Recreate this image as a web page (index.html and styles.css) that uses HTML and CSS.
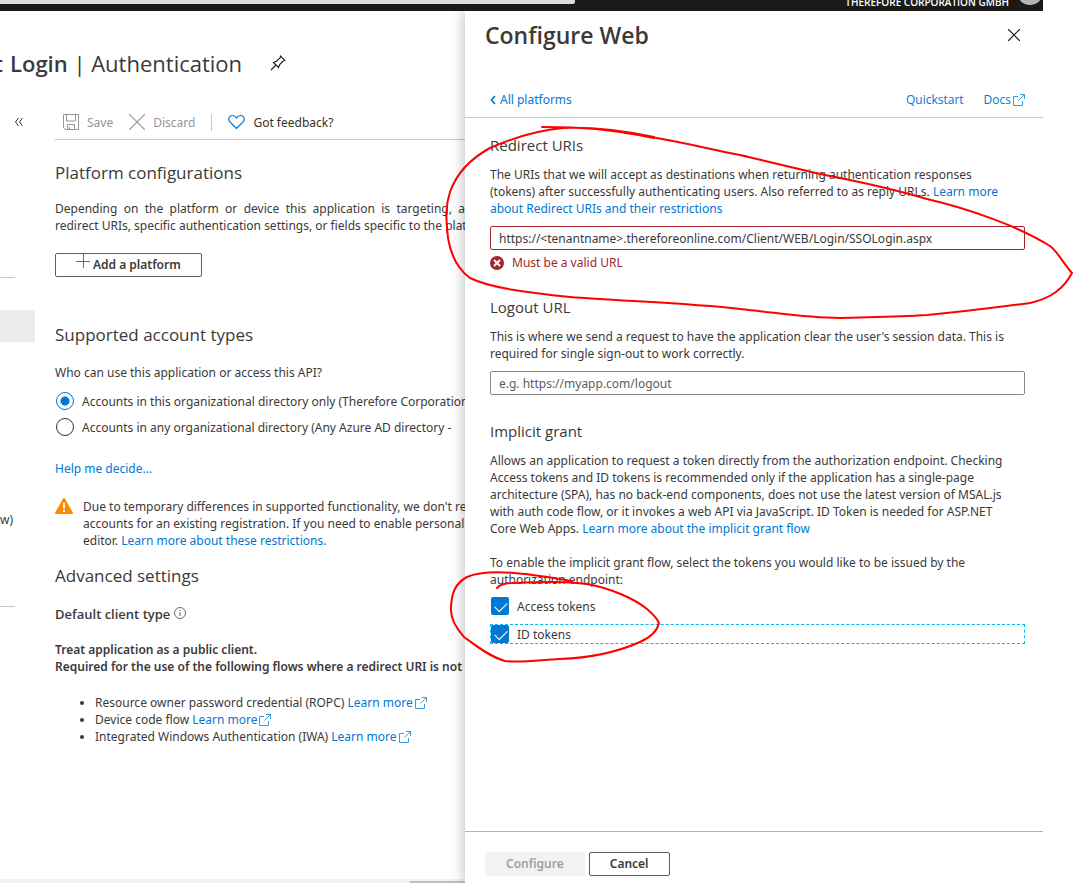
FILE: index.html
```html
<!DOCTYPE html>
<html lang="en">
<head>
<meta charset="utf-8">
<title>Configure Web</title>
<link rel="stylesheet" href="styles.css">
</head>
<body>
<svg class="symbols" aria-hidden="true">
  <symbol id="external" viewBox="0 0 14 14">
    <path d="M6 3.500H1.500v9h9V8M8 1.500h4.500v4.500M12.500 1.500L6.500 7.500" fill="none" stroke="#3a9fd6"/>
  </symbol>
</svg>
<div class="page">
  <header class="topbar">
    <div class="search"></div>
    <div class="tenant">THEREFORE CORPORATION GMBH</div>
    <div class="avatar"></div>
  </header>

  <main class="main">
    <div class="title">
      <span class="title-cut"><b>t</b></span>
      <h1><b>Login</b> | Authentication</h1>
      <svg class="pin" viewBox="0 0 16 16"><path d="M1 15l5-5M3.500 7.500l5 5 1.200-3L13 6l1.800-.6L10.600 1.200 10 3 6.500 6.300z" fill="none" stroke="#222" stroke-width="1.200"/></svg>
    </div>
    <div class="columns">
      <nav class="rail">
        <button class="collapse" aria-label="Collapse menu"><svg viewBox="0 0 8 8" width="8" height="8"><path d="M3.500 0L.5 4l3 4M7.500 0l-3 4 3 4" fill="none" stroke="#323130"/></svg></button>
        <hr class="rail-line">
        <div class="rail-active"></div>
        <div class="rail-text">w)</div>
        <hr class="rail-line">
      </nav>
      <div class="content">
        <div class="toolbar">
          <button class="tool" disabled>
            <svg viewBox="0 0 16 16" width="16" height="16"><path d="M.5.5h15v15h-13l-2-2zM3.500.5v6.500h9V.5M4.500 15.500v-5h7v5M6.500 15.500v-2.500" fill="none" stroke="#979593"/></svg>
            Save</button>
          <button class="tool" disabled>
            <svg viewBox="0 0 16 16" width="16" height="16"><path d="M0 0l16 16M16 0L0 16" fill="none" stroke="#979593" stroke-width="1.200"/></svg>
            Discard</button>
          <span class="tool-divider"></span>
          <button class="tool tool-on">
            <svg viewBox="0 0 17 16" width="17" height="16"><path d="M8.500 14.500L2 8C-.8 4.500 1.500 1.500 4.500 1.500c2 0 3.200 1 4 2.500.8-1.500 2-2.500 4-2.500 3 0 5.300 3 2.500 6.500z" fill="none" stroke="#0078d4" stroke-width="1.200"/></svg>
            Got feedback?</button>
        </div>

        <h2 class="h-platform">Platform configurations</h2>
        <p class="intro"><span class="spread">Depending on the platform or device this application is targeting, a</span>redirect URIs, specific authentication settings, or fields specific to the platform</p>
        <button class="btn add"><svg viewBox="0 0 15 15" width="15" height="15"><path d="M7.500 0v14M0 7.500h14" fill="none" stroke="#1a86c8"/></svg>Add a platform</button>

        <h2 class="h-accounts">Supported account types</h2>
        <p class="question" id="who">Who can use this application or access this API?</p>
        <div class="radios" role="radiogroup" aria-labelledby="who">
          <label class="choice"><input type="radio" name="acct" checked>Accounts in this organizational directory only (Therefore Corporation</label>
          <label class="choice"><input type="radio" name="acct">Accounts in any organizational directory (Any Azure AD directory -</label>
        </div>
        <p class="help"><a href="#">Help me decide...</a></p>
        <div class="warning">
          <svg viewBox="0 0 18 16" width="18" height="16"><path d="M9 1L17 15H1z" fill="#ff8c00" stroke="#ff8c00" stroke-width="2" stroke-linejoin="round"/><path d="M9 5v5.500M9 12v2" stroke="#fff" stroke-width="2"/></svg>
          <p>Due to temporary differences in supported functionality, we don't recommend<br>accounts for an existing registration. If you need to enable personal<br>editor. <a href="#">Learn more about these restrictions.</a></p>
        </div>

        <h2 class="h-advanced">Advanced settings</h2>
        <h3 class="client-type">Default client type <svg viewBox="0 0 12 12" width="12" height="12"><circle cx="6" cy="6" r="5.500" fill="none" stroke="#605e5c" stroke-width=".9"/><path d="M6 5v4M6 3v1" stroke="#605e5c"/></svg></h3>
        <p class="strong">Treat application as a public client.<br>Required for the use of the following flows where a redirect URI is not</p>
        <ul class="flows">
          <li>Resource owner password credential (ROPC) <a href="#">Learn more<svg class="ext"><use href="#external"/></svg></a></li>
          <li>Device code flow <a href="#">Learn more<svg class="ext"><use href="#external"/></svg></a></li>
          <li>Integrated Windows Authentication (IWA) <a href="#">Learn more<svg class="ext"><use href="#external"/></svg></a></li>
        </ul>
      </div>
    </div>
    <div class="scrollbar"><div class="thumb"></div></div>
  </main>

  <aside class="panel">
    <div class="panel-head">
      <h1>Configure Web</h1>
      <button class="close" aria-label="Close"><svg viewBox="0 0 12 12" width="12" height="12"><path d="M0 0l12 12M12 0L0 12" fill="none" stroke="#111" stroke-width="1.200"/></svg></button>
    </div>
    <div class="panel-nav">
      <a class="back" href="#"><svg viewBox="0 0 6 10" width="6" height="10"><path d="M5 1L1.500 5 5 9" fill="none" stroke="#0078d4" stroke-width="1.700"/></svg>All platforms</a>
      <a class="small" href="#">Quickstart</a>
      <a class="small" href="#">Docs<svg class="ext"><use href="#external"/></svg></a>
    </div>
    <div class="panel-body">
      <section>
        <h2><label for="redirect">Redirect URIs</label></h2>
        <p>The URIs that we will accept as destinations when returning authentication responses<br>(tokens) after successfully authenticating users. Also referred to as reply URLs. <a href="#">Learn more<br>about Redirect URIs and their restrictions</a></p>
        <input class="text invalid" id="redirect" type="text" value="https://&lt;tenantname&gt;.thereforeonline.com/Client/WEB/Login/SSOLogin.aspx">
        <div class="error"><svg viewBox="0 0 14 14" width="14" height="14"><circle cx="7" cy="7" r="7" fill="#a4262c"/><path d="M4 4l6 6M10 4l-6 6" stroke="#fff" stroke-width="2"/></svg>Must be a valid URL</div>
      </section>
      <section>
        <h2><label for="logout">Logout URL</label></h2>
        <p>This is where we send a request to have the application clear the user's session data. This is required for single sign-out to work correctly.</p>
        <input class="text" id="logout" type="text" placeholder="e.g. https://myapp.com/logout">
      </section>
      <section>
        <h2>Implicit grant</h2>
        <p>Allows an application to request a token directly from the authorization endpoint. Checking Access tokens and ID tokens is recommended only if the application has a single-page architecture (SPA), has no back-end components, does not use the latest version of MSAL.js with auth code flow, or it invokes a web API via JavaScript. ID Token is needed for ASP.NET<br>Core Web Apps. <a href="#">Learn more about the implicit grant flow</a></p>
        <p class="enable">To enable the implicit grant flow, select the tokens you would like to be issued by the authorization endpoint:</p>
        <div class="checks">
          <label class="check"><input type="checkbox" checked>Access tokens</label>
          <label class="check focused"><input type="checkbox" checked>ID tokens</label>
        </div>
      </section>
    </div>
    <footer class="panel-foot">
      <button class="btn primary" disabled>Configure</button>
      <button class="btn">Cancel</button>
    </footer>
  </aside>

  <svg class="markup" viewBox="0 0 1073 883" width="1073" height="883" aria-hidden="true">
    <path d="M542 127C583 127 607 129 654 138M654 137C620 130 590 127 563 128C540 130 515 137 490 148C470 159 456 175 450 192C444 210 447 225 448 238C451 256 459 270 470 278C490 288 530 293 570 297C620 301 690 303 740 309C780 313 805 318 840 318C870 317 895 317 927 315C970 311 1000 307 1030 303C1052 298 1064 288 1072 273C1063 263 1058 252 1050 246C1020 227 970 209 927 199C900 191 870 184 840 178C805 171 775 163 740 155C700 147 665 138 625 133"/>
    <path d="M497 588C501 584 505 583 512 583C540 582 565 581 587 584C610 588 635 599 647 609C654 615 657 618 659 623C657 632 649 638 640 642C615 653 590 658 560 659C540 660 520 663 505 661C490 657 475 645 464 637C455 627 451 618 451 610C451 592 456 583 467 577C490 567 535 575 572 581"/>
  </svg>
</div>
</body>
</html>
```
FILE: styles.css
```css
* { box-sizing: border-box; }

body {
  margin: 0;
  background: #fff;
  color: #3b3a39;
  font: 12px/17px "Noto Sans", "Open Sans", sans-serif;
}

h1, h2, h3, p, ul { margin: 0; font-weight: 400; }
h1, h2, .title-cut, .tenant { font-family: "Open Sans", "Noto Sans", sans-serif; }
a { color: #0078d4; text-decoration: none; }
svg { flex: none; }
button, input { font: inherit; color: inherit; }
b { font-weight: 600; }

.symbols { display: none; }
.ext { width: 14px; height: 14px; margin-left: 1px; vertical-align: -3px; }

.page {
  position: relative;
  display: grid;
  grid-template: 11px minmax(872px, 1fr) / minmax(0, 465fr) minmax(0, 578fr);
  min-height: 100vh;
  padding-right: 30px;
  overflow: hidden;
}

/* Top bar */
.topbar {
  grid-column: 1 / -1;
  display: flex;
  align-items: flex-end;
  gap: 8px;
  overflow: hidden;
  background: #1b1a19;
  color: #fff;
}
.search { width: 575px; height: 4px; margin: 0 auto auto 0; background: #dddcd8; border-radius: 0 0 2px 0; }
.tenant { padding-bottom: 2px; font-size: 10px; line-height: 14px; font-weight: 600; white-space: nowrap; }
.avatar { width: 26px; height: 26px; margin-bottom: 6px; border-radius: 50%; background: #b1b5b9; }

/* Page behind the panel */
.main { display: flex; flex-direction: column; overflow: hidden; white-space: nowrap; }
.title { display: flex; align-items: center; padding: 36px 0 26px; }
.title h1, .title-cut { font-size: 22px; line-height: 32px; }
.title-cut { display: flex; justify-content: flex-end; width: 3px; margin-right: 7px; overflow: hidden; }
.pin { width: 16px; height: 16px; margin-left: 28px; }
.columns { display: grid; grid-template-columns: 35px minmax(0, 1fr); gap: 20px; }

.rail { display: flex; flex-direction: column; }
.collapse { display: flex; align-items: center; height: 34px; padding: 0 0 0 15px; border: 0; background: none; }
.rail-line { width: 15px; height: 1px; margin: 138px 0 32px; border: 0; background: #c8c6c4; }
.rail-active { height: 32px; background: #edebe9; }
.rail-text { margin-top: 169px; }
.rail-text + .rail-line { margin: 78px 0 0; }

.toolbar { display: flex; align-items: center; height: 35px; padding-left: 8px; border-bottom: 1px solid #c8c6c4; }
.tool { display: flex; align-items: center; gap: 8px; margin-right: 16px; padding: 0; border: 0; background: none; color: #979593; }
.tool-on { color: #323130; }
.tool-divider { width: 1px; height: 17px; margin-right: 16px; background: #c8c6c4; }

.content h2 { font-size: 17px; line-height: 24px; }
.h-platform { margin-top: 21px; }
.intro { margin-top: 15px; }
.spread { display: block; white-space: normal; text-align-last: justify; }
.h-accounts { margin-top: 46px; }
.question { margin-top: 17px; }
.radios { margin-top: 7px; }
.choice { display: flex; align-items: center; gap: 8px; height: 26px; }
.choice input {
  flex: none;
  appearance: none;
  width: 18px;
  height: 18px;
  margin: 0 0 0 1px;
  border: 1px solid #323130;
  border-radius: 50%;
}
.choice input:checked { border-color: #0078d4; background: radial-gradient(circle, #0078d4 4px, #fff 5px); }
.help { margin-top: 20px; }
.warning { display: flex; gap: 10px; margin-top: 21px; }
.h-advanced { margin-top: 15px; }
.client-type { margin-top: 18px; font: 600 13px/17px "Open Sans", "Noto Sans", sans-serif; }
.strong { margin-top: 18px; font-weight: 600; }
.flows { margin-top: 19px; padding-left: 40px; }

.btn {
  height: 24px;
  padding: 0 20px 2px;
  border: 1px solid #605e5c;
  border-radius: 2px;
  background: #fff;
  font-weight: 600;
  line-height: 17px;
}
.add { display: flex; align-items: center; margin-top: 19px; }
.add svg { margin: -5px 2px 0 0; }

.scrollbar { display: flex; justify-content: flex-end; align-items: flex-end; height: 4px; margin-top: auto; background: #f0f0f0; }
.thumb { width: 55px; height: 2px; background: #bfbfbf; }

/* Side panel */
.panel { display: flex; flex-direction: column; background: #fff; box-shadow: 0 0 14px rgba(0, 0, 0, .3); clip-path: inset(0 0 0 -20px); }
.panel-head { display: flex; justify-content: space-between; align-items: center; padding: 8px 23px 0 20px; }
.panel-head h1 { font-size: 23px; line-height: 32px; font-weight: 600; }
.close { display: flex; padding: 0; border: 0; background: none; }
.panel-nav { display: flex; gap: 20px; margin-top: 40px; padding: 0 17px 9px 25px; border-bottom: 1px solid #c8c6c4; }
.back { display: flex; align-items: center; gap: 4px; margin-right: auto; }
.small { font-family: "Open Sans", "Noto Sans", sans-serif; }
.panel-body { padding: 17px 18px 17px 25px; }
.panel-body section { margin-bottom: 26px; }
.panel-body h2 { font-size: 15px; line-height: 20px; margin-bottom: 11px; }
.text { display: block; width: 100%; height: 24px; margin-top: 9px; padding: 0 8px; border: 1px solid #8a8886; border-radius: 2px; background: #fff; }
.text::placeholder { color: #605e5c; opacity: 1; }
.invalid { border-color: #a4262c; }
.error { display: flex; align-items: center; gap: 8px; margin-top: 4px; color: #a4262c; }
.panel-body .enable { margin-top: 17px; }
.checks { display: grid; gap: 8px; margin-top: 8px; }
.check { display: flex; align-items: center; gap: 8px; height: 20px; padding-left: 1px; }
.check input {
  appearance: none;
  width: 18px;
  height: 18px;
  margin: 0;
  border-radius: 2px;
  background: #0078d4;
}
.check input::before {
  content: "";
  display: block;
  width: 11px;
  height: 6px;
  margin: 5px 0 0 4px;
  border: solid #fff;
  border-width: 0 0 1px 1px;
  transform: rotate(-45deg);
}
.focused { outline: 1px dashed #00b7f1; outline-offset: -1px; }
.panel-foot { display: flex; gap: 4px; margin-top: auto; padding: 20px 20px 7px; border-top: 1px solid #b3b0ad; }
.primary { border-color: #f3f2f1; background: #f3f2f1; color: #a19f9d; }

/* Hand-drawn circles */
.markup { position: absolute; left: 0; top: 0; pointer-events: none; fill: none; stroke: #f00; stroke-width: 2; stroke-linecap: round; stroke-linejoin: round; }
```
